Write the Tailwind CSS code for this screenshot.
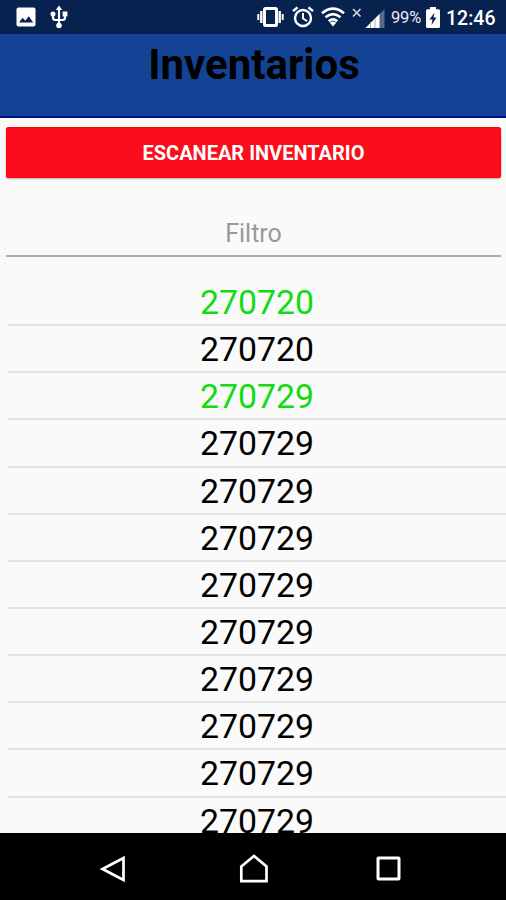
<!DOCTYPE html>
<html lang="es">
<head>
  <meta charset="UTF-8">
  <meta name="viewport" content="width=device-width, initial-scale=1.0">
  <title>Inventarios</title>
  <script src="https://cdn.jsdelivr.net/npm/@tailwindcss/browser@4"></script>
</head>
<body class="bg-[#fafafa] font-['Roboto',sans-serif] text-black">
  <div class="flex flex-col w-[506px] h-[900px] overflow-hidden">

    <!-- Status bar -->
    <div class="flex items-center justify-between h-[34px] shrink-0 bg-[#08224f] pl-4 pr-[11px] text-white">
      <div class="flex items-center gap-[14px]">
        <svg class="w-5 h-5" viewBox="0 0 20 20">
          <rect x="0.5" y="0.5" width="19" height="19" rx="2" fill="#fff"/>
          <path d="M3 15.5l3.7-4.7 2.5 3 3.6-4.6 4.4 6.3z" fill="#08224f"/>
        </svg>
        <svg class="w-[18px] h-6" viewBox="0 0 18 24" fill="none" stroke="#fff" stroke-width="2.2">
          <path d="M9 4v16M3 9v3.5q0 2.5 2.5 2.5h7q2.5 0 2.5-2.5V8"/>
          <path d="M9 0.5l3.2 4.5H5.800z" fill="#fff" stroke="none"/>
          <circle cx="3" cy="9" r="2.5" fill="#fff" stroke="none"/>
          <path d="M12.600 6.600h4.800v4.800h-4.800z" fill="#fff" stroke="none"/>
          <circle cx="9" cy="20.5" r="2.800" fill="#fff" stroke="none"/>
        </svg>
      </div>
      <div class="flex items-center">
        <svg class="w-[27px] h-5 mr-2" viewBox="0 0 27 20" fill="none" stroke="#fff">
          <rect x="7.5" y="1.500" width="12" height="17" rx="1" stroke-width="3"/>
          <path d="M4.300 4v12M22.700 4v12" stroke-width="2.400"/>
          <path d="M1.300 7v6M25.700 7v6" stroke-width="2"/>
        </svg>
        <svg class="w-[22px] h-[22px] mr-[7px]" viewBox="0 0 22 22" fill="none" stroke="#fff">
          <circle cx="11" cy="12" r="8" stroke-width="2.400"/>
          <path d="M11 7v5.500l4 2.500" stroke-width="1.900"/>
          <path d="M1 5.200L5.500 1.300M21 5.200L16.500 1.300" stroke-width="2.400"/>
        </svg>
        <svg class="w-6 h-5 mr-[7px]" viewBox="0 0 24 20" fill="none" stroke="#fff" stroke-width="2.700">
          <path d="M1 6.200Q12-3 23 6.200"/>
          <path d="M4.500 10.300Q12 4 19.500 10.300"/>
          <path d="M7.800 14.200Q12 10.500 16.200 14.200"/>
          <path d="M8.800 15.700Q12 13.500 15.200 15.700L12 19.500z" fill="#fff" stroke="none"/>
        </svg>
        <svg class="w-[34px] h-[22px] mr-[5px]" viewBox="0 0 34 22">
          <path d="M1 3l7.500 7.500M8.500 3l-7.500 7.500" stroke="#d5dbe6" stroke-width="1.600"/>
          <path d="M32.500 3v19H13.500z" fill="#59698a"/>
          <path d="M27.500 8v14H13.500z" fill="#fff"/>
          <path d="M18.500 16v6M23 12v10" stroke="#8b98b2" stroke-width="0.800"/>
        </svg>
        <span class="text-[16.5px] w-[31px] mr-[4px] leading-none tracking-[-0.2px] whitespace-nowrap text-[#e8ebf2] pt-[3px]">99%</span>
        <svg class="w-[14px] h-[21px] mr-[6px]" viewBox="0 0 14 21">
          <path d="M4 0h6v2.300h2.500q1.500 0 1.500 1.500V19.500q0 1.500-1.500 1.500h-11Q0 21 0 19.500V3.800q0-1.500 1.500-1.500H4z" fill="#fff"/>
          <path d="M8.500 5.500L3.500 12.500h3L5.500 18l5-7.500h-3z" fill="#08224f"/>
        </svg>
        <span class="w-[49px] text-[19.5px] font-medium leading-none whitespace-nowrap pt-[3px]">12:46</span>
      </div>
    </div>

    <!-- Header -->
    <header class="h-[84px] shrink-0 bg-[#144396] border-b-2 border-[#000f86] text-center">
      <h1 class="pt-[6px] pl-[2px] text-[42px] leading-[50px] font-bold">Inventarios</h1>
    </header>

    <main class="flex flex-col grow overflow-hidden">
      <button class="mt-[9px] ml-[6px] mr-[5px] h-[51px] shrink-0 rounded-[2px] bg-[#fb0d1b] border border-[#ff0008] shadow-[0_1px_2px_rgba(0,0,0,0.3)] text-white text-[20px] font-bold">ESCANEAR INVENTARIO</button>

      <input type="text" placeholder="Filtro" class="mt-[27px] ml-[6px] mr-[5px] h-[52px] pt-[6px] shrink-0 border-b-2 border-[#adadad] text-center text-[25px] placeholder:text-[#999]">

      <!-- Inventory list -->
      <ul class="mt-[22px] pl-2 text-center text-[33.8px] leading-[47px] *:h-[47.15px] *:shrink-0 *:border-b-2 *:border-[#e2e2e2] flex flex-col">
        <li class="text-[#10dc10]">270720</li>
        <li>270720</li>
        <li class="text-[#10dc10]">270729</li>
        <li>270729</li>
        <li>270729</li>
        <li>270729</li>
        <li>270729</li>
        <li>270729</li>
        <li>270729</li>
        <li>270729</li>
        <li>270729</li>
        <li>270729</li>
      </ul>
    </main>

    <!-- Navigation bar -->
    <nav class="flex items-center h-[67px] shrink-0 bg-black pl-[100px] pt-1">
      <svg class="w-[26px] h-7" viewBox="0 0 26 28" fill="none" stroke="#fff" stroke-width="2.700">
        <path d="M23.500 3v22L2.500 14z"/>
      </svg>
      <svg class="w-[30px] h-[30px] ml-[113px]" viewBox="0 0 30 30" fill="none" stroke="#fff" stroke-width="2.700">
        <path d="M2.300 12.500L15 2l12.500 10.500v14.700H2.300z"/>
      </svg>
      <svg class="w-[25px] h-[25px] ml-[107px]" viewBox="0 0 25 25" fill="none" stroke="#fff" stroke-width="3">
        <rect x="2" y="2" width="21" height="21" rx="0.500"/>
      </svg>
    </nav>
  </div>
</body>
</html>
